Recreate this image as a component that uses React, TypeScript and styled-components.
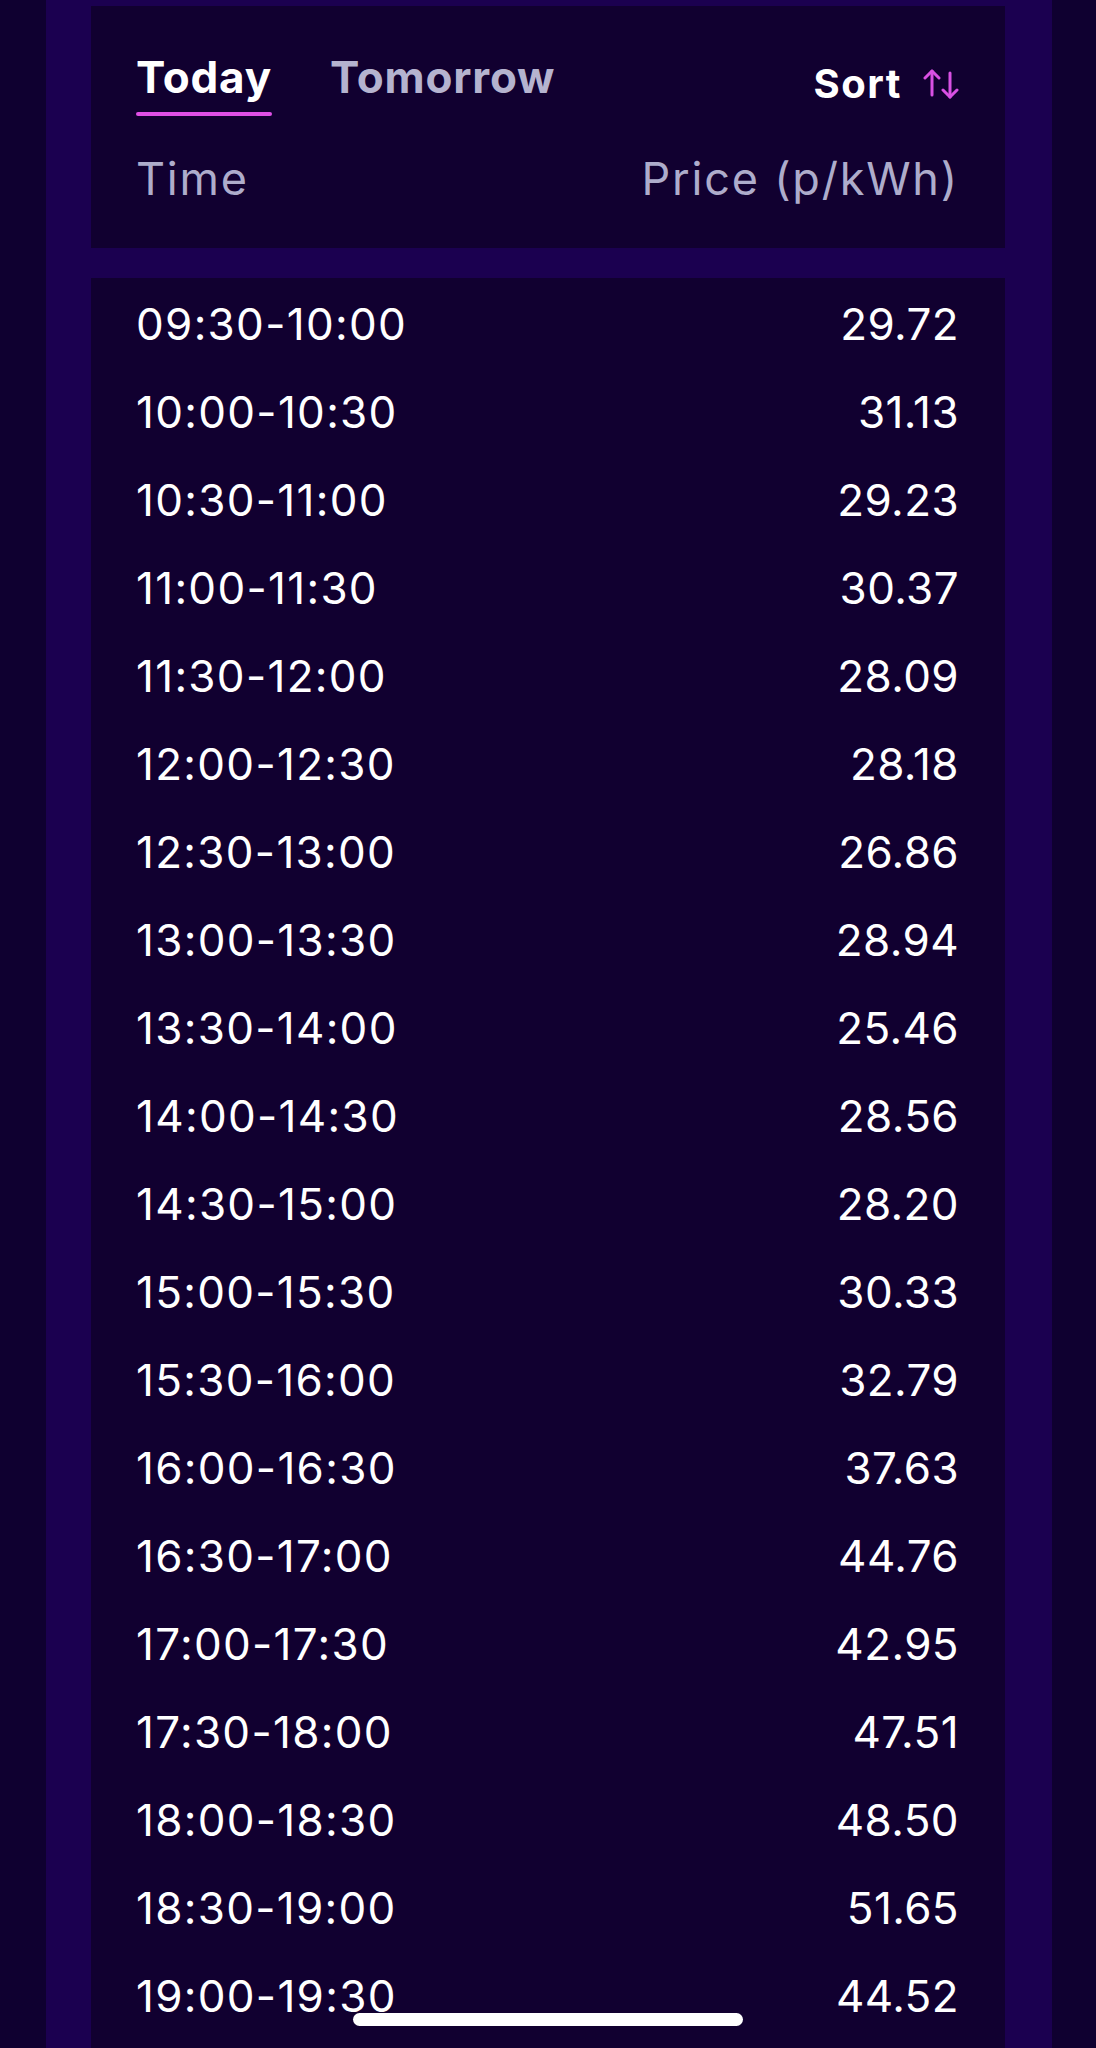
import React from "react";
import styled, { createGlobalStyle } from "styled-components";

const GlobalStyle = createGlobalStyle`
  html, body {
    margin: 0;
    padding: 0;
    background: #0f0030;
  }
  body {
    font-family: Inter, "Noto Sans", sans-serif;
    -webkit-font-smoothing: antialiased;
  }
`;

const Screen = styled.div`
  position: relative;
  width: 1096px;
  height: 2048px;
  overflow: hidden;
  background: #0f0030;
  padding: 0 44px 0 46px;
  box-sizing: border-box;
`;

const Frame = styled.div`
  height: 100%;
  background: #1b0050;
  padding: 6px 47px 0 45px;
  box-sizing: border-box;
  display: flex;
  flex-direction: column;
  gap: 30px;
`;

const Card = styled.section`
  background: #110030;
  flex-shrink: 0;
`;

const HeaderCard = styled(Card)`
  height: 242px;
  box-sizing: border-box;
  padding: 45px 46px 0 45px;
  display: flex;
  flex-direction: column;
`;

const TabBar = styled.div`
  display: flex;
  align-items: flex-start;
`;

const Tab = styled.button<{ $active?: boolean }>`
  background: none;
  border: 0;
  padding: 0;
  margin-right: 58px;
  font-family: inherit;
  font-weight: 700;
  font-size: 44px;
  line-height: 52px;
  letter-spacing: 0.8px;
  color: ${(p) => (p.$active ? "#ffffff" : "#b5b3cf")};
  display: flex;
  flex-direction: column;
  align-items: stretch;
  cursor: pointer;
  &::after {
    content: "";
    display: block;
    height: 4px;
    margin-top: 9px;
    border-radius: 2px;
    background: ${(p) => (p.$active ? "#e04fe6" : "transparent")};
  }
`;

const SortButton = styled.button`
  margin-left: auto;
  background: none;
  border: 0;
  padding: 10px 0 0 0;
  display: flex;
  align-items: center;
  gap: 21px;
  font-family: inherit;
  font-weight: 700;
  font-size: 40px;
  line-height: 46px;
  letter-spacing: 1.5px;
  color: #ffffff;
  cursor: pointer;
`;

const Columns = styled.div`
  display: flex;
  justify-content: space-between;
  margin-top: 37px;
`;

const ColumnLabel = styled.span`
  font-size: 45px;
  line-height: 52px;
  font-weight: 400;
  letter-spacing: 1.8px;
  color: #aeaccb;
`;

const ListCard = styled(Card)`
  flex: 1 0 auto;
  padding: 0 46px 0 45px;
`;

const Row = styled.div`
  display: flex;
  justify-content: space-between;
  height: 88px;
  padding-top: 2px;
  box-sizing: border-box;
  font-size: 44px;
  line-height: 88px;
  color: #ffffff;
  font-weight: 400;
`;

const TimeCell = styled.span`
  letter-spacing: 1.3px;
`;

const PriceCell = styled.span`
  letter-spacing: 0.4px;
`;

const HomeIndicator = styled.div`
  position: absolute;
  left: 353px;
  bottom: 22px;
  width: 390px;
  height: 13px;
  border-radius: 7px;
  background: #ffffff;
`;

const SortIcon = () => (
  <svg width="36" height="30" viewBox="0 0 36 30" fill="none" stroke="#d950e4" strokeWidth="3" strokeLinecap="round" strokeLinejoin="round">
    <path d="M9 2v24" />
    <path d="M2 9l7-7 7 7" />
    <path d="M27 4v24" />
    <path d="M20 21l7 7 7-7" />
  </svg>
);

const rows: [string, string][] = [
  ["09:30-10:00", "29.72"],
  ["10:00-10:30", "31.13"],
  ["10:30-11:00", "29.23"],
  ["11:00-11:30", "30.37"],
  ["11:30-12:00", "28.09"],
  ["12:00-12:30", "28.18"],
  ["12:30-13:00", "26.86"],
  ["13:00-13:30", "28.94"],
  ["13:30-14:00", "25.46"],
  ["14:00-14:30", "28.56"],
  ["14:30-15:00", "28.20"],
  ["15:00-15:30", "30.33"],
  ["15:30-16:00", "32.79"],
  ["16:00-16:30", "37.63"],
  ["16:30-17:00", "44.76"],
  ["17:00-17:30", "42.95"],
  ["17:30-18:00", "47.51"],
  ["18:00-18:30", "48.50"],
  ["18:30-19:00", "51.65"],
  ["19:00-19:30", "44.52"],
];

export default function App() {
  return (
    <>
      <GlobalStyle />
      <Screen>
        <Frame>
          <HeaderCard>
            <TabBar>
              <Tab $active>Today</Tab>
              <Tab>Tomorrow</Tab>
              <SortButton>
                Sort
                <SortIcon />
              </SortButton>
            </TabBar>
            <Columns>
              <ColumnLabel>Time</ColumnLabel>
              <ColumnLabel>Price (p/kWh)</ColumnLabel>
            </Columns>
          </HeaderCard>
          <ListCard>
            {rows.map(([t, p]) => (
              <Row key={t}>
                <TimeCell>{t}</TimeCell>
                <PriceCell>{p}</PriceCell>
              </Row>
            ))}
          </ListCard>
        </Frame>
        <HomeIndicator />
      </Screen>
    </>
  );
}
